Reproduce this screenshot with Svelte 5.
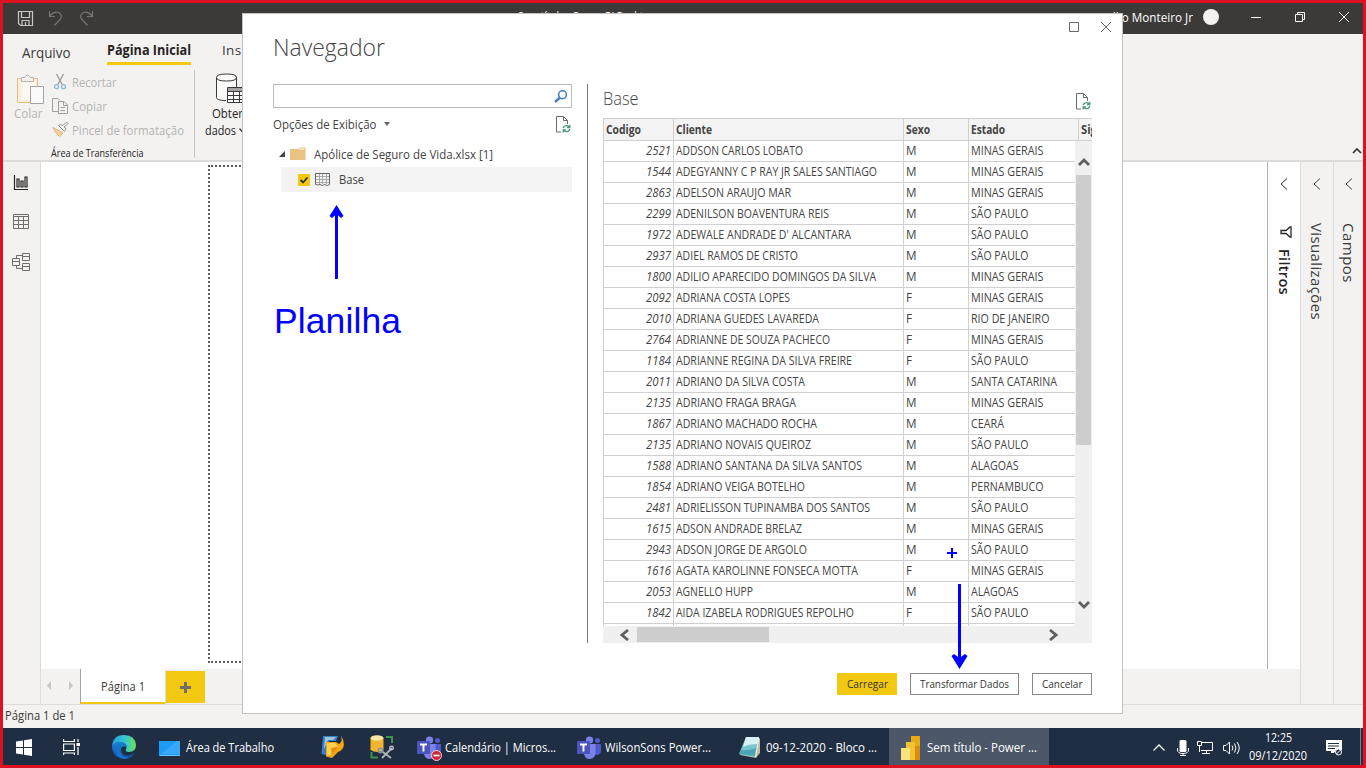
<script>
  // Makes a label fill the given length: long ones are condensed, short ones are letter-spaced.
  function fit(node, size) {
    const vertical = getComputedStyle(node).writingMode.startsWith('vertical');
    const range = document.createRange();
    range.selectNodeContents(node);
    const box = range.getBoundingClientRect();
    const natural = vertical ? box.height : box.width;
    if (size < natural && !vertical) {
      node.style.display = 'inline-block';
      node.style.transformOrigin = '0 50%';
      node.style.transform = `scaleX(${size / natural})`;
      node.style.marginRight = `${size - natural}px`;
    } else {
      node.style.letterSpacing = `${(size - natural) / node.textContent.length}px`;
    }
  }

  const MG = ['MINAS GERAIS', 72.5];
  const SP = ['SÃO PAULO', 57.5];
  const rows = [
    [2521, 'ADDSON CARLOS LOBATO', 127, 'M', MG],
    [1544, 'ADEGYANNY C P RAY JR SALES SANTIAGO', 201, 'M', MG],
    [2863, 'ADELSON ARAUJO MAR', 115, 'M', MG],
    [2299, 'ADENILSON BOAVENTURA REIS', 153, 'M', SP],
    [1972, "ADEWALE ANDRADE D' ALCANTARA", 175, 'M', SP],
    [2937, 'ADIEL RAMOS DE CRISTO', 122, 'M', SP],
    [1800, 'ADILIO APARECIDO DOMINGOS DA SILVA', 200, 'M', MG],
    [2092, 'ADRIANA COSTA LOPES', 114, 'F', MG],
    [2010, 'ADRIANA GUEDES LAVAREDA', 143, 'F', ['RIO DE JANEIRO', 78.5]],
    [2764, 'ADRIANNE DE SOUZA PACHECO', 154, 'F', MG],
    [1184, 'ADRIANNE REGINA DA SILVA FREIRE', 176, 'F', SP],
    [2011, 'ADRIANO DA SILVA COSTA', 129, 'M', ['SANTA CATARINA', 86]],
    [2135, 'ADRIANO FRAGA BRAGA', 120, 'M', MG],
    [1867, 'ADRIANO MACHADO ROCHA', 141, 'M', ['CEARÁ', 33]],
    [2135, 'ADRIANO NOVAIS QUEIROZ', 135, 'M', SP],
    [1588, 'ADRIANO SANTANA DA SILVA SANTOS', 186, 'M', ['ALAGOAS', 47.5]],
    [1854, 'ADRIANO VEIGA BOTELHO', 129, 'M', ['PERNAMBUCO', 72.5]],
    [2481, 'ADRIELISSON TUPINAMBA DOS SANTOS', 194, 'M', SP],
    [1615, 'ADSON ANDRADE BRELAZ', 126, 'M', MG],
    [2943, 'ADSON JORGE DE ARGOLO', 131, 'M', SP],
    [1616, 'AGATA KAROLINNE FONSECA MOTTA', 182, 'F', MG],
    [2053, 'AGNELLO HUPP', 77, 'M', ['ALAGOAS', 47.5]],
    [1842, 'AIDA IZABELA RODRIGUES REPOLHO', 178, 'F', SP]
  ];
</script>

{#snippet refresh()}
  <svg width="16" height="17" viewBox="0 0 16 17" fill="none">
    <path d="M6 16H1.500V.5H8.500L12.500 4.500V8M8.500 .5V4.500H12.500" stroke="#6b6b6b" />
    <path d="M8.200 12Q9 9.700 11.500 9.700Q13 9.700 14.500 11M14.800 8.800V11.500H12M14.800 13Q14 15.700 11.500 15.700Q10 15.700 8.500 14.400M8.200 16.500V13.800H11" stroke="#4c9c7e" stroke-width="1.300" />
  </svg>
{/snippet}

{#snippet teams()}
  <svg width="24" height="24" viewBox="0 0 24 24">
    <circle cx="12.500" cy="4" r="3.600" fill="#7b83eb" /><circle cx="20.500" cy="4.500" r="2.500" fill="#5059c9" />
    <path d="M16 8H24V15Q24 19 19 19H16Z" fill="#5059c9" />
    <path d="M8 8H18.500V16Q18.500 23 12.500 23Q8 23 7 18Z" fill="#7b83eb" />
    <rect y="5" width="13" height="13" rx="1" fill="#4b53bc" />
    <path d="M3 8.500H10M6.500 8.500V15.500" stroke="#fff" stroke-width="1.900" />
  </svg>
{/snippet}

<div class="screen">
  <header class="titlebar">
    <svg class="quick" width="80" height="18" viewBox="0 0 80 18" fill="none">
      <g stroke="#c9c8c7" stroke-width="1.200"><path d="M1.500 1.500H15.500V15.500H3.500L1.500 13.500ZM4.500 2V7.500H12.500V2M5 15V10.500H12V15M8.500 12V15" /></g>
      <path d="M32.500 1V6.500H38M32.800 6Q37 .8 41.500 2.500Q46 5 43.500 9L37.500 15.500M75.500 1V6.500H70M75.200 6Q71 .8 66.500 2.500Q62 5 64.500 9L70.500 15.500" stroke="#777574" stroke-width="1.200" />
    </svg>
    <span class="apptitle"><span use:fit={137}>Sem título - Power BI Desktop</span></span>
    <span class="user"><span use:fit={94}>Willio Monteiro Jr</span></span>
    <i class="avatar"></i>
    <svg class="winbtns" width="102" height="12" viewBox="0 0 102 12" fill="none" stroke="#fff">
      <path d="M0 6.500H10M44.500 3.500H51.500V10.500H44.500ZM46.500 3.500V1.500H53.500V8.500H51.500M88 1L98 11M98 1L88 11" />
    </svg>
  </header>

  <section class="ribbon">
    <nav class="tabs">
      <span class="tab file"><span use:fit={48.5}>Arquivo</span></span>
      <span class="tab active"><span use:fit={84}>Página Inicial</span></span>
      <span class="tab insert">Inserir</span>
    </nav>
    <div class="tools">
      <div class="clip">
        <div class="paste">
          <svg width="28" height="31" viewBox="0 0 28 31" fill="none">
            <path d="M.5 4.500H20.500V28.500H.5Z" fill="#fbeedb" stroke="#e9bc83" /><path d="M4.500 7.500H18V26H4.500Z" fill="#fcf9f5" />
            <path d="M4.500 7.500V3.500H7.500Q10.500 -1.500 13.500 3.500H16.500V7.500Z" fill="#f3f2f1" stroke="#b3b1b0" /><path d="M13.500 12.500H26.500V29.500H13.500Z" fill="#fafafa" stroke="#a5a3a2" />
          </svg>
          <span use:fit={28.5}>Colar</span>
        </div>
        <ul class="cmds">
          <li>
            <svg width="20" height="18" viewBox="0 0 20 18" fill="none"><path d="M4.500 1L10.500 12M11.500 1L5.500 12" stroke="#999" stroke-width="1.300" /><circle cx="4.500" cy="13.700" r="2" stroke="#8bbad6" stroke-width="1.300" /><circle cx="11.500" cy="13.700" r="2" stroke="#8bbad6" stroke-width="1.300" /></svg>
            <span use:fit={44.5}>Recortar</span>
          </li>
          <li>
            <svg width="20" height="18" viewBox="0 0 20 18" fill="none" stroke="#a09e9d"><path d="M6 14.500H.5V1.500H6L8 3.500M6.500 4.500H12L15.500 8V16.500H6.500ZM11.500 5V8.500H15M8.500 10.500H13M8.500 13.500H13" /></svg>
            <span use:fit={35}>Copiar</span>
          </li>
          <li>
            <svg width="20" height="18" viewBox="0 0 20 18" fill="none"><path d="M1 6.500L11 12Q9 14.500 7.500 15.500Q3 12 1 6.500Z" fill="#f4cfa0" stroke="#e3b47c" /><path d="M6.500 4.500L12.500 10.500L14 7.500L12 6L16 2.500L14.500 1L11 4.500L8.500 3.500Z" fill="#f3f2f1" stroke="#999" /></svg>
            <span use:fit={112}>Pincel de formatação</span>
          </li>
        </ul>
        <p class="group"><span use:fit={92.5}>Área de Transferência</span></p>
      </div>
      <div class="getdata">
        <svg width="30" height="31" viewBox="0 0 30 31" fill="none" stroke="#3b3a39">
          <path d="M10 27.500Q.5 27.500 .5 24.500V4.500Q.5 1 10.500 1Q20.500 1 20.500 4.500V14" fill="#fafafa" /><path d="M.5 4.500Q.5 8 10.500 8Q20.500 8 20.500 4.500" />
          <path d="M11.500 14.500H30V29.500H11.500Z" fill="#fff" /><path d="M12 16.500H30" stroke="#a5a3a2" stroke-width="3" /><path d="M11.500 18.500H30M11.500 22.500H30M11.500 26.500H30M17.500 18V29M23.500 18V29" />
        </svg>
        <span><span use:fit={31}>Obter</span></span>
        <span><span use:fit={31}>dados</span><svg width="7" height="5" fill="none" stroke="#3b3a39" stroke-width="1.300"><path d="M.5 .5L3.500 4L6.500 .5" /></svg></span>
      </div>
      <svg class="collapse" width="10" height="6" viewBox="0 0 10 6" fill="none" stroke="#333" stroke-width="1.700"><path d="M1 5L5 1L9 5" /></svg>
    </div>
  </section>

  <main class="workspace">
    <aside class="rail">
      <svg width="16" height="16" viewBox="0 0 16 16" fill="none" stroke="#252423"><path d="M1.500 0V14.500H15M4 4H6V12H4ZM8 6H10V12H8ZM12 2H14V12H12Z" stroke-width="1.200" /></svg>
      <svg width="16" height="16" viewBox="0 0 16 16" fill="none" stroke="#706e6d"><path d="M.5 .5H15.500V14.500H.5ZM.5 2.500H15.500M.5 6.500H15.500M.5 10.500H15.500M5.500 3V14M10.500 3V14" /></svg>
      <svg width="18" height="18" viewBox="0 0 18 18" fill="none" stroke="#706e6d"><path d="M.5 5.500H7.500V12.500H.5ZM.5 8.500H7.500M10.500 .5H17.500V7.500H10.500ZM10.500 3.500H17.500M10.500 10.500H17.500V17.500H10.500ZM10.500 13.500H17.500M4.500 5V2.500H10M4.500 13V15.500H10" /></svg>
    </aside>
    <div class="center">
      <div class="report">
        <div class="canvas"><div class="page"></div></div>
        <div class="pane filters">
          <svg width="8" height="12" viewBox="0 0 8 12" fill="none" stroke="#252423"><path d="M7 .5L1 6L7 11.500" /></svg>
          <svg class="funnel" width="12" height="12" viewBox="0 0 12 12" fill="none" stroke="#252423" stroke-width="1.300"><path d="M11 1V11H10L6 7.500H1V4.500H6L10 1Z" /></svg>
          <b use:fit={46}>Filtros</b>
        </div>
      </div>
      <div class="pages">
        <svg width="39" height="35" viewBox="0 0 39 35" fill="#c8c6c4"><path d="M10 12V21L6 16.500ZM28 12V21L32 16.500Z" /></svg>
        <span class="current"><span use:fit={44}>Página 1</span></span>
        <span class="add"><svg width="11" height="11"><path d="M5.500 0V11M0 5.500H11" stroke="#706e6d" stroke-width="3" /></svg></span>
      </div>
    </div>
    <div class="pane side">
      <svg width="8" height="12" viewBox="0 0 8 12" fill="none" stroke="#444"><path d="M7 .5L1 6L7 11.500" /></svg>
      <span use:fit={97}>Visualizações</span>
    </div>
    <div class="pane side last">
      <svg width="8" height="12" viewBox="0 0 8 12" fill="none" stroke="#444"><path d="M7 .5L1 6L7 11.500" /></svg>
      <span use:fit={60}>Campos</span>
    </div>
  </main>
  <div class="status"><span use:fit={70}>Página 1 de 1</span></div>

  <footer class="taskbar">
    <span class="launch"><svg width="17" height="17" viewBox="0 0 17 17" fill="#fff"><path d="M0 2.500L7 1.500V8H0ZM8 1.300L16 0V8H8ZM0 9H7V15.500L0 14.500ZM8 9H16V17L8 15.700Z" /></svg></span>
    <span class="launch"><svg width="17" height="16" viewBox="0 0 17 16" fill="none" stroke="#fff" stroke-width="1.200"><path d="M.6 0V2.500H11.400V0M.6 5H11.400V11.500H.6ZM.6 16V14H11.400V16M15 0V3M15 8V16" /><path d="M13.500 4H17V7H13.500Z" fill="#fff" stroke="none" /></svg></span>
    <span class="launch">
      <svg width="24" height="24" viewBox="0 0 24 24">
        <defs><linearGradient id="edgeTop"><stop stop-color="#2b9fe6" /><stop offset=".55" stop-color="#35c7d0" /><stop offset="1" stop-color="#6bdf57" /></linearGradient><linearGradient id="edgeLow" x2="0" y2="1"><stop stop-color="#1785d8" /><stop offset="1" stop-color="#0c4fa8" /></linearGradient></defs>
        <path d="M0 11Q1 0 12 0Q23 0 24 10Q24 17 17 17Q12 17 14.500 13Q15 8 9 7Q3 7 0 11Z" fill="url(#edgeTop)" />
        <path d="M0 11Q3 6 9 7Q15 8 14.500 12Q9 10 9 15Q10 21 16 20.500Q20 20 22.500 18Q19 24 12 24Q0 23 0 11Z" fill="url(#edgeLow)" />
        <path d="M9 9Q5 14 9 19Q12 24 18 22Q15 24 12 24Q4 23 4 15Q4 9 9 9Z" fill="#1b74c9" />
      </svg>
    </span>
    <span class="app desk"><svg width="22" height="16" viewBox="0 0 22 16"><path d="M0 1H21V16H0Z" fill="#1c9cf5" /><path d="M2 14L18 1H21V14Z" fill="#37a8fb" /><path d="M1 15.500H21" stroke="#6cc4fb" /></svg><span use:fit={88}>Área de Trabalho</span></span>
    <span class="launch">
      <svg width="24" height="24" viewBox="0 0 24 24"><path d="M2 1H17L15 6H8V12L5 20L.5 19Z" fill="#3d7fc0" /><path d="M4 2H15L12 5H7L3 14Z" fill="#9cc6e7" /><path d="M5 7H15L18 9Q22 7 20 0Q27 13 17 17L11 23L5 21.500Z" fill="#f5a516" /><path d="M6 8H14L17 12Q13 12 11 16L10 20L6 20.500Z" fill="#ffd24b" /><path d="M10 13L17 12L11 19Z" fill="#e78d10" /></svg>
    </span>
    <span class="launch">
      <svg width="25" height="24" viewBox="0 0 25 24" fill="none"><path d="M.5 3V15Q7 19 13.500 15V3Z" fill="#f1b52d" /><ellipse cx="7" cy="3" rx="6.500" ry="2.800" fill="#ffe7a0" /><path d="M16 2H22V8M1.500 17V22.500H8" stroke="#3b9447" stroke-width="2" /><path d="M10 15L21 23M12 23L22 13" stroke="#aeb4b9" stroke-width="1.800" /><circle cx="10.500" cy="15.500" r="2.200" stroke="#8c949b" stroke-width="1.500" /><circle cx="21.500" cy="13" r="1.800" stroke="#c5c9cc" stroke-width="1.300" /></svg>
    </span>
    <span class="app">{@render teams()}<svg class="busy" width="11" height="11" viewBox="0 0 11 11"><circle cx="5.500" cy="5.500" r="5" fill="#d0263e" stroke="#f4d0d5" /><path d="M2.500 5.500H8.500" stroke="#fff" stroke-width="1.700" /></svg><span use:fit={111}>Calendário | Micros...</span></span>
    <span class="app">{@render teams()}<span use:fit={106}>WilsonSons Power...</span></span>
    <span class="app"><svg width="24" height="24" viewBox="0 0 24 24"><path d="M9 2L22 3L22 17L18 22L2 19Z" fill="#c3bb9a" /><path d="M8 1H21L17 21L1 18Z" fill="#79c4d2" /><path d="M8 1H21L19.500 8Q11 8 5 11Z" fill="#d6f2f5" /><path d="M3 14Q10 15 18 12L17 20L1 18Z" fill="#4aa5b8" /><path d="M21 2L17.500 21" stroke="#f2f5f4" /></svg><span use:fit={111}>09-12-2020 - Bloco ...</span></span>
    <span class="app open"><svg width="20" height="24" viewBox="0 0 20 24"><path d="M10 0H18Q19 0 19 1V24H10Z" fill="#d98d10" /><path d="M10 0H18Q19 0 19 1V10H10Z" fill="#e8a913" /><path d="M5 6H14V24H5Z" fill="#f0c333" /><path d="M0 12H8Q9 12 9 13V24H0Z" fill="#fae27e" /></svg><span use:fit={110}>Sem título - Power ...</span></span>
    <div class="tray">
      <span><svg width="12" height="7" fill="none" stroke="#fff" stroke-width="1.300"><path d="M.5 6.500L6 1L11.500 6.500" /></svg></span>
      <span><svg width="12" height="16" viewBox="0 0 12 16"><rect x="2.500" width="7" height="12" rx="1.500" fill="#fff" /><path d="M.5 8V10Q.5 13.500 6 13.500Q11.500 13.500 11.500 10V8M6 13V15.500M3 15.500H9" fill="none" stroke="#fff" /></svg></span>
      <span><svg width="17" height="14" viewBox="0 0 17 14" fill="none" stroke="#fff"><path d="M5 1.500H15.500V9.500H4M.5 .5H4.500V4.500H.5ZM2.500 5V11M9.500 10V12.500M5 12.500H13" /></svg></span>
      <span><svg width="18" height="14" viewBox="0 0 18 14" fill="none" stroke="#fff"><path d="M.5 4.500H3L6.500 1V13L3 9.500H.5ZM9 4.500Q11 7 9 9.500M11.500 2.500Q14.500 7 11.500 11.500M14 1Q18.500 7 14 13" /></svg></span>
      <div class="clock"><span use:fit={27}>12:25</span><span use:fit={58}>09/12/2020</span></div>
      <span><svg width="16" height="16" viewBox="0 0 16 16"><path d="M0 0H16V10H10L8 13H5V11H0Z" fill="#fff" /><path d="M2 3.500H13M2 6H13M2 8.500H9" stroke="#1f2e43" /><circle cx="12.500" cy="12" r="3" fill="#1f2e43" stroke="#fff" /><path d="M10.500 14L14.500 10" stroke="#fff" /></svg></span>
      <i></i>
    </div>
  </footer>

  <div class="dialog">
    <svg class="dlgbtns" width="43" height="12" viewBox="0 0 43 12" fill="none" stroke="#6b6b6b"><path d="M.5 1.500H9.500V10.500H.5ZM32 1L42 11M42 1L32 11" /></svg>
    <h1><span use:fit={112}>Navegador</span></h1>
    <div class="cols">
      <div class="left">
        <div class="search"><svg width="14" height="13" viewBox="0 0 14 13" fill="none" stroke="#4681bd"><circle cx="8.500" cy="4.700" r="3.900" stroke-width="1.600" /><path d="M6 7.500L1 12" stroke-width="2.500" /></svg></div>
        <div class="options"><span use:fit={103.5}>Opções de Exibição</span><i></i>{@render refresh()}</div>
        <div class="node">
          <svg width="7" height="7"><path d="M6 0V6H0Z" fill="#444" /></svg>
          <svg class="folder" width="16" height="14" viewBox="0 0 16 14"><path d="M0 2H8L9.500 .5H15.500V13H0Z" fill="#eac282" /><path d="M9 2H14.500" stroke="#fff" /></svg>
          <span use:fit={179}>Apólice de Seguro de Vida.xlsx [1]</span>
        </div>
        <div class="node leaf">
          <svg width="12" height="12"><path d="M0 0H12V12H0Z" fill="#f2c811" /><path d="M2.500 6L5 8.500L9.500 3.500" fill="none" stroke="#333" stroke-width="1.800" /></svg>
          <svg class="sheet" width="15" height="14" viewBox="0 0 15 14" fill="none" stroke="#aaa"><path d="M.5 3.500H14.500M.5 6.500H14.500M.5 9.500H14.500M4.500 .5V11M7.500 .5V11M11.500 .5V11" /><path d="M.5 .5H14.500V11.500Q12.500 13.500 9.500 11.500Q7.500 13.500 5 11.500Q3 12.500 .5 11.500Z" stroke="#666" /></svg>
          <span use:fit={25}>Base</span>
        </div>
      </div>
      <div class="right">
        <div class="sheetname"><span use:fit={35.5}>Base</span>{@render refresh()}</div>
        <div class="grid">
          <div class="row head"><span><b use:fit={35}>Codigo</b></span><span><b use:fit={36}>Cliente</b></span><span><b use:fit={24}>Sexo</b></span><span><b use:fit={34}>Estado</b></span><span><b use:fit={26}>Sigla</b></span></div>
          <div class="body">
            <div class="rows">
              {#each rows as [code, name, width, sex, [state, stateWidth]]}
                <div class="row"><em><span use:fit={25}>{code}</span></em><span><span use:fit={width}>{name}</span></span><span><span use:fit={sex === 'M' ? 10.5 : 6}>{sex}</span></span><span><span use:fit={stateWidth}>{state}</span></span></div>
              {/each}
              <div class="row"><em></em><span></span><span></span><span></span></div>
            </div>
            <div class="vbar">
              <svg width="12" height="9" fill="none" stroke="#606060" stroke-width="2.800"><path d="M1 7L6 2L11 7" /></svg>
              <i></i>
              <svg width="12" height="9" fill="none" stroke="#606060" stroke-width="2.800"><path d="M1 2L6 7L11 2" /></svg>
            </div>
          </div>
          <div class="hbar">
            <svg width="9" height="12" fill="none" stroke="#606060" stroke-width="2.800"><path d="M8 1L2 6L8 11" /></svg>
            <i></i>
            <svg width="9" height="12" fill="none" stroke="#606060" stroke-width="2.800"><path d="M1 1L7 6L1 11" /></svg>
          </div>
        </div>
      </div>
    </div>
    <div class="actions">
      <button class="primary"><span use:fit={41}>Carregar</span></button>
      <button class="wide"><span use:fit={89}>Transformar Dados</span></button>
      <button><span use:fit={40.5}>Cancelar</span></button>
    </div>
  </div>

  <svg class="notes" width="1366" height="768" fill="none" stroke="#00f">
    <path d="M336.500 279V212M959.500 584V661" stroke-width="3" />
    <path d="M336.500 205L343.500 216L341 218L336.500 214L332 218L329.500 216ZM959.500 669L967.500 656L965 654L959.500 658L954 654L951.500 656Z" fill="#00f" stroke="none" />
    <path d="M947 553H957M952 548V558" stroke-width="2" />
    <text x="274" y="333" textLength="127" fill="#00f" stroke="none">Planilha</text>
  </svg>
</div>

<style>
  :global(body) { margin: 0; overflow: hidden; }
  * { box-sizing: border-box; }
  svg { flex: none; display: block; }
  span, b { white-space: nowrap; }
  .screen {
    position: relative; width: 1366px; height: 768px; border: 3px solid #dc1122;
    display: flex; flex-direction: column; overflow: hidden; background: #f3f2f1;
    font-family: "Open Sans", "Noto Sans", sans-serif; font-size: 12px; color: #3b3a39;
  }
  .titlebar { height: 31px; background: #3b3a39; display: flex; align-items: center; color: #fff; }
  .quick { margin: 0 0 0 14px; }
  .apptitle { margin-left: 421px; width: 180px; font-size: 12px; line-height: 14px; margin-top: -3px; }
  .user { margin-left: auto; margin-right: 10px; margin-top: -3px; }
  .avatar { width: 16px; height: 16px; border-radius: 50%; background: #f3f2f1; margin: -3px 32px 0 0; }
  .winbtns { margin: -3px 10px 0 0; }

  .ribbon { height: 128px; border-bottom: 2px solid #dcdbda; display: flex; flex-direction: column; }
  .tabs { height: 34px; display: flex; font-size: 14px; padding-left: 19px; }
  .tab { line-height: 20px; padding-top: 6px; }
  .file { width: 85px; padding-top: 9px; }
  .active { width: 84px; height: 31px; border-bottom: 3px solid #f2c811; font-weight: 700; color: #252423; margin-right: 31px; }
  .insert { font-size: 13.500px; letter-spacing: .3px; }
  .tools { flex: 1; display: flex; padding-top: 2px; }
  .clip { width: 192px; height: 88px; border-right: 1px solid #c8c6c4; display: grid; grid-template-columns: 47px 1fr; grid-template-rows: 73px 15px; color: #b5b3b1; }
  .paste { padding: 4px 0 0 11px; }
  .paste svg { margin-left: 3px; }
  .paste span { display: block; line-height: 18px; }
  .cmds { list-style: none; margin: 0; padding: 0 0 0 2px; }
  .cmds li { height: 24px; display: flex; align-items: center; }
  .group { grid-column: 1 / 3; margin: 0; padding-left: 48px; font-size: 10.500px; line-height: 21px; color: #252423; }
  .getdata { padding: 3px 0 0 10px; color: #252423; line-height: 17px; width: 60px; }
  .getdata svg { margin: 0 0 1px 11px; }
  .getdata > span { display: flex; align-items: center; padding-left: 7px; }
  .getdata > span + span { padding-left: 0; }
  .getdata > span svg { margin: 0 0 0 3px; }
  .collapse { margin: 78px 1px 0 auto; }

  .workspace { height: 542px; display: flex; }
  .rail { width: 38px; border-right: 1px solid #dcdbda; padding: 13px 0 0 10px; display: flex; flex-direction: column; gap: 23px; }
  .rail svg:last-child { margin-left: -1px; }
  .center { flex: 1; display: flex; flex-direction: column; }
  .report { height: 507px; display: flex; background: #fff; }
  .canvas { flex: 1; padding: 3px 0 6px 167px; }
  .page { height: 498px; width: 800px; border: 2px dotted #605e5c; }
  .pane { width: 33px; display: flex; flex-direction: column; align-items: center; padding-top: 16px; font-size: 15px; }
  .pane span, .pane b { writing-mode: vertical-rl; line-height: 20px; }
  .filters { border-left: 1px solid #b3b1b0; color: #252423; }
  .filters b { font-weight: 600; margin-top: 11px; font-size: 14.500px; }
  .funnel { margin: 36px 0 0 4px; }
  .side { border-left: 1px solid #dcdbda; }
  .side span { margin-top: 33px; }
  .last { width: 30px; }
  .pages { height: 35px; display: flex; }
  .current { width: 86px; border-left: 1px solid #a5a3a2; border-right: 1px solid #dcdbda; border-bottom: 2px solid #f2c811; background: #fff; padding-left: 20px; line-height: 35px; }
  .add { width: 39px; height: 32px; margin-top: 2px; background: #f2c811; display: grid; place-items: center; }
  .status { height: 24px; border-top: 1px solid #dcdbda; padding-left: 2px; line-height: 22px; font-size: 12px; }

  .taskbar { height: 37px; background: #1f2e43; color: #fff; display: grid; grid-template-columns: 42px 53px 52px 162px 42px 56px 160px 161px 158px 160px 1fr; }
  .launch { display: grid; place-items: center; padding-top: 1px; }
  .app { display: flex; align-items: center; gap: 4px; padding-left: 7px; position: relative; padding-top: 2px; font-size: 12.500px; }
  .desk { padding-left: 9px; gap: 5px; }
  .open { background: #4c5869; padding-left: 12px; gap: 6px; }
  .busy { position: absolute; left: 21px; top: 22px; }
  .tray { display: grid; grid-template-columns: 28px 19px 27px 26px 66px 46px 2px; justify-content: end; padding-right: 1px; }
  .tray > span { display: grid; place-items: center; padding: 2px 6px 0 0; }
  .tray i { border-left: 1px solid #77818e; }
  .clock { display: flex; flex-direction: column; align-items: center; line-height: 18px; padding: 1px 6px 0 0; }

  .dialog { position: absolute; left: 239px; top: 10px; width: 881px; height: 701px; background: #fff; border: 1px solid #c3c2c1; padding: 17px 30px 18px; color: #444; font-size: 12px; }
  .dlgbtns { position: absolute; right: 10px; top: 7px; }
  h1 { margin: 0; font-size: 24px; font-weight: 300; line-height: 32px; height: 53px; }
  .cols { height: 559px; display: flex; }
  .left { width: 315px; border-right: 1px solid #777; }
  .search { width: 299px; height: 24px; border: 1px solid #bbb; display: flex; justify-content: flex-end; padding: 5px 3px; }
  .options { height: 34px; width: 298px; display: flex; align-items: center; padding-bottom: 2px; }
  .options i { border: 3px solid transparent; border-top: 4px solid #666; border-bottom: 0; margin: 0 auto 1px 7px; }
  .node { height: 25px; display: flex; align-items: center; padding-left: 6px; }
  .folder { margin: 0 8px 1px 4px; }
  .leaf { background: #f3f3f3; margin-left: 8px; width: 291px; padding-left: 17px; }
  .sheet { margin: 0 9px 0 5px; }
  .right { margin-left: 15px; width: 489px; }
  .sheetname { height: 34px; display: flex; font-size: 18px; font-weight: 300; line-height: 28px; align-items: center; padding-right: 1px; }
  .sheetname span { margin-top: -7px; }
  .sheetname :global(svg) { margin-left: auto; }
  .grid { height: 525px; width: 489px; display: flex; flex-direction: column; font-size: 12px; }
  .row { height: 21px; display: grid; grid-template-columns: 71px 230px 65px 110px 60px; line-height: 20px; border-bottom: 1px solid #d0d0d0; }
  .row > * { border-right: 1px solid #d0d0d0; padding-left: 2px; }
  .row > :first-child { border-left: 1px solid #d0d0d0; }
  .row em { text-align: right; padding-right: 2px; }
  .head { height: 23px; flex: none; background: #f3f3f3; border-top: 1px solid #d0d0d0; overflow: hidden; line-height: 21px; }
  .head b { font-weight: 700; }
  .body { height: 485px; display: flex; overflow: hidden; }
  .rows { width: 472px; overflow: hidden; }
  .vbar { width: 17px; height: 485px; background: #f0f0f0; display: flex; flex-direction: column; align-items: center; padding: 17px 0; }
  .vbar i { width: 15px; height: 270px; background: #cdcdcd; margin: 8px 0 auto; }
  .hbar { height: 17px; background: #f0f0f0; display: flex; align-items: center; padding: 0 34px 0 17px; }
  .hbar i { width: 132px; height: 15px; background: #cdcdcd; margin: 0 auto 0 8px; }
  .actions { display: flex; justify-content: flex-end; gap: 13px; margin-top: 30px; }
  button { width: 60px; height: 22px; padding: 0; border: 1px solid #888; background: #fff; font: 11.500px/20px "Open Sans", sans-serif; color: #333; }
  .wide { width: 109px; }
  .primary { background: #f2c811; border-color: #f2c811; }
  .notes { position: absolute; left: -3px; top: -3px; }
  .notes text { font: 35.500px "Liberation Sans", sans-serif; }
</style>
